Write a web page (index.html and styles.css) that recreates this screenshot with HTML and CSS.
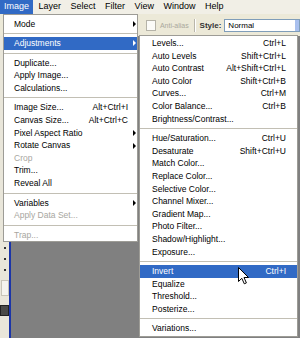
FILE: index.html
```html
<!DOCTYPE html>
<html lang="en">
<head>
    <title>Image menu</title>
    <meta charset="utf-8"/>
    <link rel="stylesheet" href="styles.css">
</head>
<body>

<div class="app">
    <div class="menubar">
        <span class="mb-item active">Image</span>
        <span class="mb-item">Layer</span>
        <span class="mb-item">Select</span>
        <span class="mb-item">Filter</span>
        <span class="mb-item">View</span>
        <span class="mb-item">Window</span>
        <span class="mb-item">Help</span>
    </div>

    <div class="optbar">
        <span class="check"></span>
        <span class="opt-dim">Anti-alias</span>
        <span class="opt-sep"></span>
        <span class="opt-label">Style:</span>
        <span class="select">
            <span class="select-text">Normal</span>
            <span class="select-btn"></span>
        </span>
    </div>

    <div class="work">
        <div class="toolbox">
            <i class="tool t-a"></i>
            <i class="tool t-b"></i>
            <i class="tool t-c"></i>
            <i class="tool t-box"></i>
            <i class="tool t-dark"></i>
        </div>
        <div class="canvas"></div>
    </div>

    <!-- Image menu -->
    <div class="menu main-menu">
        <div class="item"><span>Mode</span><span></span><span class="arrow"></span></div>
        <div class="sep"></div>
        <div class="item hl"><span>Adjustments</span><span></span><span class="arrow"></span></div>
        <div class="sep"></div>
        <div class="item"><span>Duplicate...</span></div>
        <div class="item"><span>Apply Image...</span></div>
        <div class="item"><span>Calculations...</span></div>
        <div class="sep"></div>
        <div class="item"><span>Image Size...</span><span class="key">Alt+Ctrl+I</span></div>
        <div class="item"><span>Canvas Size...</span><span class="key">Alt+Ctrl+C</span></div>
        <div class="item"><span>Pixel Aspect Ratio</span><span></span><span class="arrow"></span></div>
        <div class="item"><span>Rotate Canvas</span><span></span><span class="arrow"></span></div>
        <div class="item off"><span>Crop</span></div>
        <div class="item"><span>Trim...</span></div>
        <div class="item"><span>Reveal All</span></div>
        <div class="sep"></div>
        <div class="item"><span>Variables</span><span></span><span class="arrow"></span></div>
        <div class="item off"><span>Apply Data Set...</span></div>
        <div class="sep"></div>
        <div class="item off"><span>Trap...</span></div>
    </div>

    <!-- Adjustments submenu -->
    <div class="menu sub-menu">
        <div class="item"><span>Levels...</span><span class="key">Ctrl+L</span></div>
        <div class="item"><span>Auto Levels</span><span class="key">Shift+Ctrl+L</span></div>
        <div class="item"><span>Auto Contrast</span><span class="key">Alt+Shift+Ctrl+L</span></div>
        <div class="item"><span>Auto Color</span><span class="key">Shift+Ctrl+B</span></div>
        <div class="item"><span>Curves...</span><span class="key">Ctrl+M</span></div>
        <div class="item"><span>Color Balance...</span><span class="key">Ctrl+B</span></div>
        <div class="item"><span>Brightness/Contrast...</span></div>
        <div class="sep"></div>
        <div class="item"><span>Hue/Saturation...</span><span class="key">Ctrl+U</span></div>
        <div class="item"><span>Desaturate</span><span class="key">Shift+Ctrl+U</span></div>
        <div class="item"><span>Match Color...</span></div>
        <div class="item"><span>Replace Color...</span></div>
        <div class="item"><span>Selective Color...</span></div>
        <div class="item"><span>Channel Mixer...</span></div>
        <div class="item"><span>Gradient Map...</span></div>
        <div class="item"><span>Photo Filter...</span></div>
        <div class="item"><span>Shadow/Highlight...</span></div>
        <div class="item"><span>Exposure...</span></div>
        <div class="sep"></div>
        <div class="item hl"><span>Invert</span><span class="key">Ctrl+I</span></div>
        <div class="item"><span>Equalize</span></div>
        <div class="item"><span>Threshold...</span></div>
        <div class="item"><span>Posterize...</span></div>
        <div class="sep"></div>
        <div class="item"><span>Variations...</span></div>
    </div>

    <svg class="cursor" width="12" height="18" viewBox="0 0 12 18">
        <path d="M0.5 0.5 L0.5 14.5 L3.8 11.3 L6.3 16.8 L8.4 15.9 L6 10.5 L10.5 10.5 Z" fill="#fff" stroke="#000" stroke-width="1"/>
    </svg>
</div>

</body>
</html>
```

FILE: styles.css
```css
body {
    margin: 0;
    width: 300px;
    height: 338px;
    overflow: hidden;
    font-family: "Liberation Sans", Arial, sans-serif;
    font-size: 8.5px;
    color: #000;
}

.app {
    position: relative;
    width: 300px;
    height: 338px;
    display: flex;
    flex-direction: column;
    background: #ece9d8;
}

/* menu bar */
.menubar {
    display: flex;
    gap: 1.5px;
    height: 14px;
    background: #f1efe6;
}

.mb-item {
    padding: 0 4px;
    font-size: 9px;
    line-height: 13px;
    white-space: nowrap;
}

.mb-item.active {
    background: #316ac5;
    color: #fff;
}

/* options bar */
.optbar {
    display: flex;
    align-items: center;
    height: 22px;
    padding-left: 146px;
    white-space: nowrap;
    background: #ece9d8;
}

.check {
    width: 9px;
    height: 9px;
    border: 1px solid #b5b3a8;
    background: #fbfbf8;
}

.opt-dim {
    margin-left: 4px;
    font-size: 7px;
    color: #aaa89c;
}

.opt-sep {
    width: 1px;
    height: 13px;
    margin: 0 4px 0 5px;
    background: #b9b6aa;
    border-right: 1px solid #fff;
}

.opt-label {
    font-size: 8px;
    font-weight: bold;
    color: #333;
}

.select {
    display: flex;
    align-items: center;
    width: 84px;
    height: 11px;
    margin-left: 3px;
    border: 1px solid #7f9db9;
    background: #fff;
}

.select-text {
    flex: 1;
    padding-left: 3px;
    font-size: 8px;
}

.select-btn {
    width: 4px;
    height: 11px;
    background: #a9c0ee;
}

/* work area */
.work {
    flex: 1;
    display: flex;
}

.toolbox {
    width: 9px;
    display: flex;
    flex-direction: column;
    align-items: center;
    padding-top: 211px;
    gap: 9px;
    border-right: 2px solid #1b35a8;
    background: #e9e6da;
}

.tool {
    display: block;
    width: 2px;
    height: 2px;
    background: #333;
}

.t-box {
    width: 6px;
    height: 14px;
    border: 1px solid #c8c5b8;
    background: #f5f4ee;
}

.t-dark {
    width: 7px;
    height: 9px;
    background: #4a4a48;
    border: 1px solid #222;
}

.canvas {
    flex: 1;
    background: #808080;
}

/* dropdown menus */
.menu {
    position: absolute;
    background: #fff;
    border: 1px solid #9d9c96;
}

.main-menu {
    left: 3px;
    top: 14px;
    width: 133px;
    padding: 2.5px 0 0;
}

.sub-menu {
    left: 139px;
    top: 35px;
    width: 157px;
    padding: 1px 0;
}

.item {
    display: grid;
    grid-template-columns: 1fr auto 9px;
    align-items: center;
    height: 12.6px;
    line-height: 12.6px;
    padding-left: 10px;
    white-space: nowrap;
}

.sub-menu .item {
    grid-template-columns: 1fr auto 11px;
    padding-left: 12px;
}

.item.hl {
    background: #316ac5;
    color: #fff;
}

.item.off {
    color: #a7a6a0;
}

.arrow {
    justify-self: end;
    margin-right: 1px;
    width: 0;
    height: 0;
    border-left: 3px solid #000;
    border-top: 3px solid transparent;
    border-bottom: 3px solid transparent;
}

.item.hl .arrow {
    border-left-color: #fff;
}

.sep {
    margin: 3px 0;
    border-top: 1px solid #c2bfb4;
}

.cursor {
    position: absolute;
    left: 238px;
    top: 267px;
}
```
